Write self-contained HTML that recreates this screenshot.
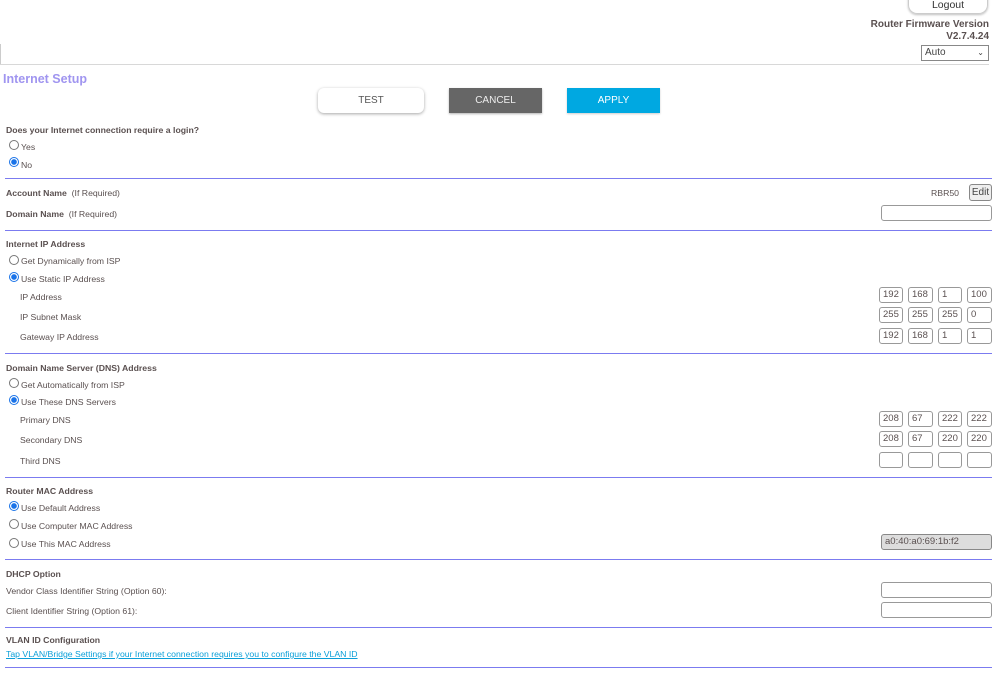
<!DOCTYPE html>
<html><head><meta charset="utf-8"><style>
*{margin:0;padding:0;box-sizing:border-box}
body{width:999px;height:673px;background:#fff;position:relative;overflow:hidden;font-family:"Liberation Sans",Arial,sans-serif;color:#5a5050;font-size:8.7px}
.a{position:absolute;white-space:nowrap;line-height:12px;margin-top:1px}
.b{font-weight:bold}
.hl{position:absolute;left:5px;width:987px;height:1px;background:#7b7bf0}
.r{position:absolute;width:10px;height:10px;border:1px solid #777;border-radius:50%;background:#fff}
.r.on{border:1px solid #1a73e8;background:radial-gradient(circle,#1a73e8 0 2.6px,#fff 3px)}
.box{position:absolute;height:16px;border:1px solid #999;border-radius:3px;background:#fff;font-size:9.5px;line-height:14px;padding-left:3px;color:#5a5050}
</style></head><body>
<div class="a" style="left:908px;top:-4px;width:80px;height:17px;border:1px solid #ccc;border-top:none;border-radius:0 0 9px 9px;box-shadow:0 1px 2px rgba(0,0,0,.25);text-align:center;line-height:17px;font-size:10.5px;color:#333">Logout</div>
<div class="a b" style="right:10px;top:18px;font-size:10px;text-align:right;line-height:12px">Router Firmware Version<br>V2.7.4.24</div>
<div class="a" style="left:921px;top:44px;width:68px;height:16px;border:1px solid #888;font-size:10px;line-height:14px;padding-left:3px;color:#444">Auto<span style="position:absolute;right:4px;top:0;font-size:8px">&#8964;</span></div>
<div style="position:absolute;left:0;top:44px;width:1px;height:20px;background:#ccc"></div>
<div style="position:absolute;left:0;top:64px;width:989px;height:1px;background:#d8d8d8"></div>
<div class="a b" style="left:3px;top:71px;font-size:12.5px;line-height:15px;color:#a095f0">Internet Setup</div>
<div class="a" style="left:318px;top:87px;width:106px;height:25px;border-radius:6px;background:#fff;box-shadow:0 1px 3px rgba(0,0,0,.35);text-align:center;line-height:25px;font-size:10px;color:#555">TEST</div>
<div class="a" style="left:449px;top:87px;width:93px;height:25px;background:#666;box-shadow:0 1px 2px rgba(0,0,0,.3);text-align:center;line-height:25px;font-size:10px;color:#eee">CANCEL</div>
<div class="a" style="left:567px;top:87px;width:93px;height:25px;background:#00a8e1;box-shadow:0 1px 2px rgba(0,0,0,.2);text-align:center;line-height:25px;font-size:10px;color:#fff">APPLY</div>

<div class="a b" style="left:6px;top:123px">Does your Internet connection require a login?</div>
<div class="r" style="left:9px;top:140px"></div><div class="a" style="left:21px;top:140px">Yes</div>
<div class="r on" style="left:9px;top:157px"></div><div class="a" style="left:21px;top:158px">No</div>
<div class="hl" style="top:178px"></div>

<div class="a" style="left:6px;top:186px"><b>Account Name</b>&nbsp; (If Required)</div>
<div class="a" style="left:931px;top:186px">RBR50</div>
<div class="a" style="left:969px;top:183px;width:23px;height:17px;border:1px solid #888;border-radius:3px;background:#eee;text-align:center;line-height:15px;font-size:10px;color:#444">Edit</div>
<div class="a" style="left:6px;top:207px"><b>Domain Name</b>&nbsp; (If Required)</div>
<div class="box" style="left:881px;top:205px;width:111px"></div>
<div class="hl" style="top:230px"></div>

<div class="a b" style="left:6px;top:237px">Internet IP Address</div>
<div class="r" style="left:9px;top:255px"></div><div class="a" style="left:21px;top:254px">Get Dynamically from ISP</div>
<div class="r on" style="left:9px;top:272px"></div><div class="a" style="left:21px;top:272px">Use Static IP Address</div>
<div class="a" style="left:20px;top:290px">IP Address</div>
<div class="a" style="left:20px;top:310px">IP Subnet Mask</div>
<div class="a" style="left:20px;top:330px">Gateway IP Address</div>

<div class="box" style="left:879px;top:287px;width:24px">192</div><div class="box" style="left:908px;top:287px;width:25px">168</div><div class="box" style="left:938px;top:287px;width:24px">1</div><div class="box" style="left:967px;top:287px;width:25px">100</div>
<div class="box" style="left:879px;top:307px;width:24px">255</div><div class="box" style="left:908px;top:307px;width:25px">255</div><div class="box" style="left:938px;top:307px;width:24px">255</div><div class="box" style="left:967px;top:307px;width:25px">0</div>
<div class="box" style="left:879px;top:328px;width:24px">192</div><div class="box" style="left:908px;top:328px;width:25px">168</div><div class="box" style="left:938px;top:328px;width:24px">1</div><div class="box" style="left:967px;top:328px;width:25px">1</div>
<div class="hl" style="top:353px"></div>

<div class="a b" style="left:6px;top:361px">Domain Name Server (DNS) Address</div>
<div class="r" style="left:9px;top:378px"></div><div class="a" style="left:21px;top:378px">Get Automatically from ISP</div>
<div class="r on" style="left:9px;top:395px"></div><div class="a" style="left:21px;top:395px">Use These DNS Servers</div>
<div class="a" style="left:20px;top:413px">Primary DNS</div>
<div class="a" style="left:20px;top:433px">Secondary DNS</div>
<div class="a" style="left:20px;top:454px">Third DNS</div>
<div class="box" style="left:879px;top:411px;width:24px">208</div><div class="box" style="left:908px;top:411px;width:25px">67</div><div class="box" style="left:938px;top:411px;width:24px">222</div><div class="box" style="left:967px;top:411px;width:25px">222</div>
<div class="box" style="left:879px;top:431px;width:24px">208</div><div class="box" style="left:908px;top:431px;width:25px">67</div><div class="box" style="left:938px;top:431px;width:24px">220</div><div class="box" style="left:967px;top:431px;width:25px">220</div>
<div class="box" style="left:879px;top:452px;width:24px"></div><div class="box" style="left:908px;top:452px;width:25px"></div><div class="box" style="left:938px;top:452px;width:24px"></div><div class="box" style="left:967px;top:452px;width:25px"></div>
<div class="hl" style="top:477px"></div>

<div class="a b" style="left:6px;top:484px">Router MAC Address</div>
<div class="r on" style="left:9px;top:501px"></div><div class="a" style="left:21px;top:501px">Use Default Address</div>
<div class="r" style="left:9px;top:519px"></div><div class="a" style="left:21px;top:519px">Use Computer MAC Address</div>
<div class="r" style="left:9px;top:538px"></div><div class="a" style="left:21px;top:537px">Use This MAC Address</div>
<div class="box" style="left:881px;top:534px;width:111px;background:#ddd;border-color:#888">a0:40:a0:69:1b:f2</div>
<div class="hl" style="top:559px"></div>

<div class="a b" style="left:6px;top:567px">DHCP Option</div>
<div class="a" style="left:6px;top:584px">Vendor Class Identifier String (Option 60):</div>
<div class="a" style="left:6px;top:604px">Client Identifier String (Option 61):</div>
<div class="box" style="left:881px;top:582px;width:111px"></div>
<div class="box" style="left:881px;top:602px;width:111px"></div>
<div class="hl" style="top:627px"></div>

<div class="a b" style="left:6px;top:633px">VLAN ID Configuration</div>
<div class="a" style="left:6px;top:647px;color:#0a9fd8;text-decoration:underline">Tap VLAN/Bridge Settings if your Internet connection requires you to configure the VLAN ID</div>
<div class="hl" style="top:667px"></div>
</body></html>
